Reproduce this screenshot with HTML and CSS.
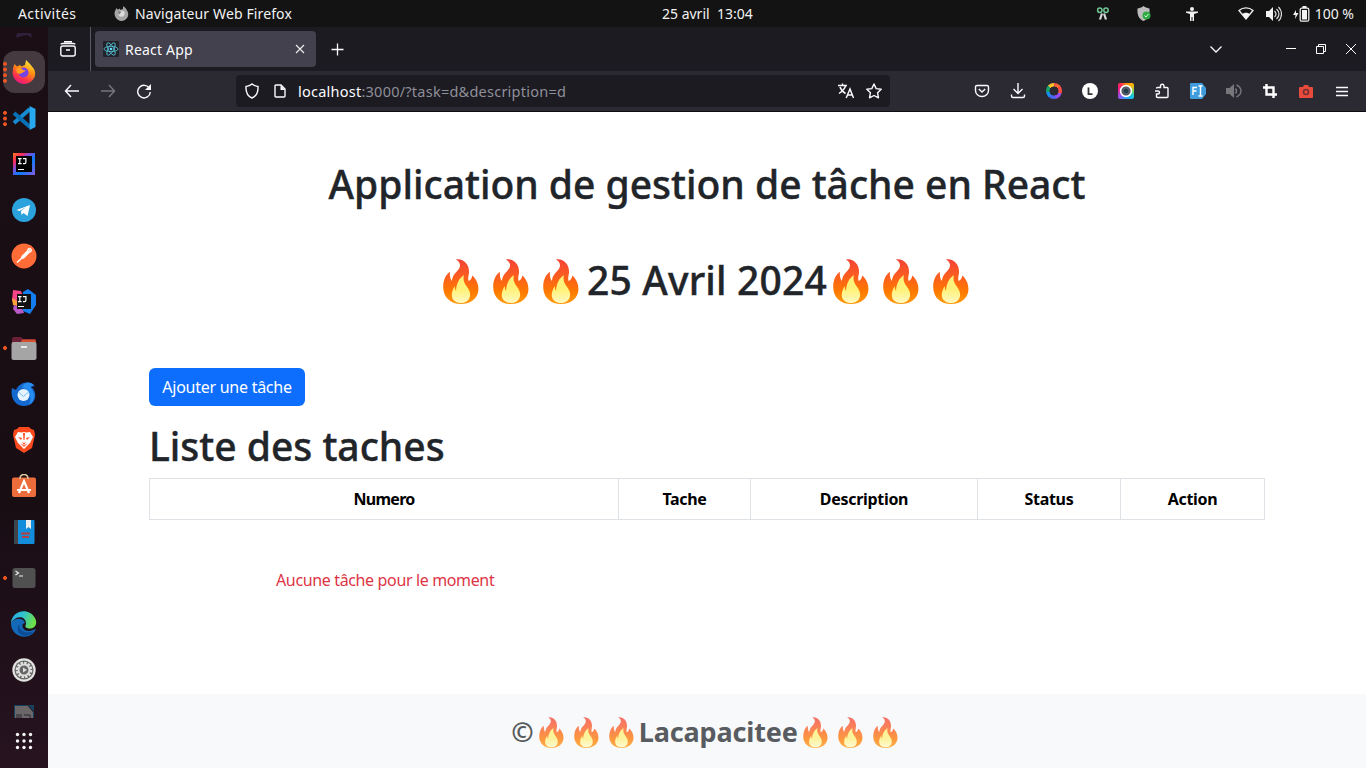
FILE: index.html
```
<!DOCTYPE html>
<html lang="fr">
<head>
<meta charset="utf-8">
<title>React App</title>
<link rel="stylesheet" href="styles.css">
</head>
<body>
<svg class="defs" width="0" height="0" aria-hidden="true">
  <defs>
    <linearGradient id="fl" x1="0" y1="0" x2="0" y2="1"><stop offset="0" stop-color="#f44336"/><stop offset=".35" stop-color="#fb5b22"/><stop offset=".7" stop-color="#ff7700"/><stop offset="1" stop-color="#ff9a0c"/></linearGradient>
    <linearGradient id="fi" x1="0" y1="0" x2="0" y2="1"><stop offset="0" stop-color="#fff176"/><stop offset=".55" stop-color="#fff27d"/><stop offset="1" stop-color="#fff9c4"/></linearGradient>
    <linearGradient id="ff" x1=".8" y1="0" x2=".3" y2="1"><stop offset="0" stop-color="#fff44f"/><stop offset=".4" stop-color="#ff980e"/><stop offset=".75" stop-color="#ff3647"/><stop offset="1" stop-color="#e31587"/></linearGradient>
    <linearGradient id="ij" x1="0" y1="0" x2="1" y2="1"><stop offset="0" stop-color="#fc801d"/><stop offset=".22" stop-color="#fe2857"/><stop offset=".4" stop-color="#7b4fe0"/><stop offset=".6" stop-color="#087cfa"/><stop offset="1" stop-color="#8a5be0"/></linearGradient>
    <linearGradient id="edge" x1="0" y1="0" x2="1" y2=".3"><stop offset="0" stop-color="#2aa7e8"/><stop offset=".5" stop-color="#2fc3cf"/><stop offset="1" stop-color="#6be04a"/></linearGradient>
    <symbol id="flame" viewBox="0 0 36 45">
      <path fill="url(#fl)" d="M13 .5C21-.8 26.500 6 26 13.500c-.2 3-1.400 5.500-.4 8.500 2-.5 3.200-2.500 3.800-5.400 4.600 4.400 6.200 9.500 6 14.400C35 39 28 45 18 45S0 38.500.2 27.500C.3 21.500 2.500 15.500 7 12.700 6.500 15.500 7 19.500 8.800 22c.9-5.500 3-7.500 5.700-10.300C18.500 7.500 17.500 3 13 .5z"/>
      <path fill="url(#fi)" d="M20.800 16c-.8 5.500.5 8 3 11.500 2.500 3.500 3.700 6 3.200 9.500-.7 4.800-4.500 7-8.800 7-5 0-9.200-2.600-9.400-7.500-.1-4 1.200-6.500 3-9.500 0 2 .2 3.400 1.200 4.700C13.500 24.500 16 19.500 20.800 16z"/>
    </symbol>
  </defs>
</svg>
<header class="panel">
  <span class="t act">Activités</span>
  <svg class="pf" width="15" height="15" viewBox="0 0 24 24"><path fill="#a5a5a5" d="M2 7l2-4 2 3 3-2 1 2 4-1 1-5 4 4 3 5c3 8-3 15-10 15S0 17 1 10z"/><circle cx="12" cy="12" r="5" fill="#ddd"/><path d="M6 8l6 1-4 5z" fill="#777"/></svg>
  <span class="t nav">Navigateur Web Firefox</span>
  <span class="t clock">25 avril&nbsp; 13:04</span>
  <div class="tray">
    <svg width="14" height="14" viewBox="0 0 14 14" fill="none"><g stroke="#72c795" stroke-width="1.500"><circle cx="3.800" cy="3.300" r="2.200"/><circle cx="10" cy="3.300" r="2.200"/></g><path d="M6 6.500L4 12.500M8 6.500l2 6" stroke="#d9d9d9" stroke-width="2.200"/></svg>
    <svg width="14" height="16" viewBox="0 0 14 16"><path fill="#bdbdbd" d="M6.500 0C9 2 11 2 12.500 2.500 13 9 11 13 6.500 15 2 13 0 9 .5 2.500 2 2 4 2 6.500 0z"/><circle cx="9.500" cy="9.500" r="4" fill="#2faa45"/><path d="M7.500 9.500l1.500 1.500 2.500-3" stroke="#cfffcf" fill="none"/></svg>
    <svg width="12" height="14" viewBox="0 0 12 14" fill="#f2f2f2"><circle cx="6" cy="2" r="2"/><path d="M0 4.500h12v1.300L8 7v7H6.500v-4h-1v4H4V7L0 5.800z"/></svg>
    <svg width="16" height="13" viewBox="0 0 16 13"><path fill="none" stroke="#eee" stroke-width="1.300" d="M1 3.500C5 0 11 0 15 3.500L8 12z"/><path fill="#f4f4f4" d="M4 7.200c2-2 6-2 8 0L8 12z"/></svg>
    <svg width="16" height="16" viewBox="0 0 16 16"><path fill="#f2f2f2" d="M0 5h3l4-4v14l-4-4H0z"/><path fill="none" stroke="#ddd" stroke-width="1.200" d="M8.500 5c2 2 2 4 0 6M10.500 3c3.300 3 3.300 7 0 10M12.500 1c4 4 4 10 0 14"/></svg>
    <svg width="17" height="16" viewBox="0 0 17 16"><path fill="#f2f2f2" d="M3 4L0 9h2.500L2 13l3.500-6H3z"/><rect x="7.200" y="2.200" width="8.600" height="13" rx="1.500" fill="none" stroke="#eee" stroke-width="1.300"/><path fill="#f2f2f2" d="M9 4h5v9.500H9zM9.500 0h4v2h-4z"/></svg>
    <span class="t pct">100 %</span>
  </div>
</header>
<div class="desk">
<nav class="dock">
  <div class="stub"><svg width="18" height="6" viewBox="0 0 18 6"><path d="M2 0h14l1 5-5-3-5 1-6 2z" fill="#30203c"/></svg></div>
  <div class="app on d4"><svg width="24" height="24" viewBox="0 0 24 24"><path fill="url(#ff)" d="M1 8l1.500-4L5 6.500 8 5l1.500 1.500L13 5l1-5 4 4 4 5c4 8-3 15-10 15S-1 17 1 10z"/><circle cx="11.500" cy="12.500" r="5" fill="#7542e5"/><path d="M4 9l4-2 3 3 3 .5-3 2-3 1.500-3-1z" fill="#ff9a22"/></svg></div>
  <div class="app d3"><svg width="24" height="24" viewBox="0 0 24 24"><path fill="none" stroke="#168bd2" stroke-width="4" d="M18 3L2 17"/><path fill="none" stroke="#0871b5" stroke-width="4" d="M18 21L2 7"/><path fill="#28a8ee" d="M17.500 0l6 3v18l-6 3z"/></svg></div>
  <div class="app"><svg width="24" height="24" viewBox="0 0 24 24"><path fill="url(#ij)" d="M1 1h22v22H1z"/><path d="M4 4h16v16H4z"/><path stroke="#fff" stroke-width="1.200" fill="none" d="M6 6.600h3.600M7.800 6.600v5M6 11.600h3.600M11 6.600h2.900v3.600q0 1.400-1.400 1.400H11M6 17.500h6"/></svg></div>
  <div class="app"><svg width="24" height="24" viewBox="0 0 24 24"><circle cx="12" cy="12" r="12" fill="#2ba2dc"/><path fill="#fff" d="M4.500 12L18 7l-2.500 11-4-3-2 2-.5-4 5-4-6.500 4z"/></svg></div>
  <div class="app"><svg width="26" height="26" viewBox="0 0 26 26"><circle cx="13" cy="13" r="12.500" fill="#ff6c37"/><path stroke="#fff" stroke-width="3.400" stroke-linecap="round" d="M17 9l-5 5"/><path stroke="#fff" stroke-width="1.500" d="M13 13l-7 6.500"/><circle cx="18.500" cy="7.300" r="2" fill="#ffd9c9" stroke="#fff"/></svg></div>
  <div class="app"><svg width="26" height="26" viewBox="0 0 26 26"><path fill="#f54586" d="M2 1l8 1 2 5-7 8-4-3z"/><path fill="#f9a13c" d="M1 9l5 3v5l-4-1z"/><path fill="#147df0" d="M12 3l5-3 8 6v10l-6 9-7-3z"/><path fill="#b75ac7" d="M3 16l8 3 2 5-7 1-4-5z"/><path fill="#111" d="M6 5h14v15H6z"/><path stroke="#fff" stroke-width="1.200" fill="none" d="M7 7.600h3.600M8.800 7.600v5M7 12.600h3.600M12 7.600h2.900v3.600q0 1.400-1.400 1.400H12M7 17.500h6"/></svg></div>
  <div class="app d1"><svg width="26" height="24" viewBox="0 0 26 24"><path fill="#6b2038" d="M1 3q0-2 2-2h7l2 2h13v8H1z"/><path fill="#d7502c" d="M11 3.500h12q2 0 2 2V9H9z"/><rect x=".5" y="6" width="25" height="18" rx="2" fill="#a5a5a5"/><path stroke="#fff" stroke-width="1.500" d="M10 11h6"/></svg></div>
  <div class="app"><svg width="26" height="26" viewBox="0 0 26 26"><path fill="#1469cf" d="M1 7l4 2c2-5 8-9 14-7l5 3-4 1c7 4 6 19-7 19C4 25-1 17 1 7z"/><path fill="#288df0" d="M11 6c2-5 8-6 12-2l-4 2c5 5 6 14-1 18 4-8 0-14-7-18z"/><circle cx="12.500" cy="14" r="6" fill="#e7f4ff"/><path d="M7.500 11l5 4.500 5-4.500" fill="none" stroke="#77bdf3"/></svg></div>
  <div class="app"><svg width="24" height="26" viewBox="0 0 24 26"><path fill="#fb4a1d" d="M7 0h10l2 2 3 1 1 5-3 13-8 5-8-5L1 8l1-5 3-1z"/><path fill="#fff" d="M6 5l4 .5 2-.5 2 .5 4-.5 3 5-3 6-3 3-3 3-3-3-3-3-3-6z"/><path fill="#fb4a1d" d="M6 10l4 1-1 2zM18 10l-4 1 1 2zM10 15l2 1 2-1-2 3zM11 6h2l-.5 7h-1zM8 16l4 2.500 4-2.500-4 4z"/></svg></div>
  <div class="app"><svg width="24" height="24" viewBox="0 0 24 24"><rect y="3.500" width="24" height="19.500" rx="2" fill="#ed6c3c"/><path d="M8 5c0-6 8-6 8 0" fill="none" stroke="#dccaa1" stroke-width="1.500"/><path d="M7 19l5-12 5 12M5 16h14" fill="none" stroke="#fff" stroke-width="2.200"/></svg></div>
  <div class="app"><svg width="22" height="26" viewBox="0 0 22 26"><rect x="1.500" y="1" width="20" height="24" rx="1" fill="#128ddc"/><path fill="#444" d="M1.500 1H5v24H1.500z"/><path fill="#eee" d="M13 1h5v9l-2.500-2L13 10z"/><path stroke="#b54141" stroke-width="1.800" d="M8 14.500h9M9 18h7"/></svg></div>
  <div class="app d1"><svg width="24" height="22" viewBox="0 0 24 22"><rect x=".5" y="1" width="23" height="20" rx="2.500" fill="#505050"/><path d="M3.500 4l3 2-3 2M7 9h4" fill="none" stroke="#eee" stroke-width="1.200"/></svg></div>
  <div class="app"><svg width="26" height="26" viewBox="0 0 26 26"><path fill="#1469b8" d="M0 12C4 6 13 7 14 12c-5 1-2 8 3 8 4 0 7-2 8-2-3 7-10 9-16 7C3 23 0 18 0 12z"/><path fill="url(#edge)" d="M0 12C1-1 18-4 24 7c4 8-3 12-8 10-3-1-1-2-1-5C14 4 4 5 0 12z"/><path fill="#0c4d96" d="M8 13c0 8 8 10 15 7-4 6-12 6-15 2-2-3-2-6 0-9z"/></svg></div>
  <div class="app"><svg width="24" height="24" viewBox="0 0 24 24"><circle cx="12" cy="12" r="11.700" fill="#e2e2e0"/><circle cx="12" cy="12" r="9.500" fill="#666"/><circle cx="12" cy="12" r="7" fill="none" stroke="#e2e2e0" stroke-width="2.500" stroke-dasharray="2.400 1.260"/><circle cx="12" cy="12" r="5.500" fill="none" stroke="#ddd" stroke-width="2"/><path d="M11 9.500l4 2.500-4 2.500z" fill="#ddd"/></svg></div>
  <div class="part"><svg width="20" height="13" viewBox="0 0 20 13"><path fill="#6b6769" d="M0 0h13l6 7v6H0z"/><path fill="#17425f" d="M14 0h6v7z"/><path d="M2 10h6M2 12h6M10 10h6v3" stroke="#292933" fill="none"/><path d="M0 .5h13M.5 0v13M19.500 7v6" stroke="#17425f"/></svg></div>
  <div class="grid"><svg width="18" height="18" viewBox="0 0 18 18" fill="#f5f5f5"><circle cx="2.500" cy="2.500" r="1.700"/><circle cx="9" cy="2.500" r="1.700"/><circle cx="15.500" cy="2.500" r="1.700"/><circle cx="2.500" cy="9" r="1.700"/><circle cx="9" cy="9" r="1.700"/><circle cx="15.500" cy="9" r="1.700"/><circle cx="2.500" cy="15.500" r="1.700"/><circle cx="9" cy="15.500" r="1.700"/><circle cx="15.500" cy="15.500" r="1.700"/></svg></div>
</nav>
<section class="win">
  <div class="tabs">
    <div class="view"><svg width="16" height="16" viewBox="0 0 16 16" fill="none" stroke="#fbfbfe" stroke-width="1.400"><rect x=".8" y="5" width="14.400" height="10" rx="2"/><path d="M1 3.500q0-1 1.500-1h11q1.500 0 1.500 1M4 .7h8M6 9h4"/></svg></div>
    <div class="tab">
      <svg width="16" height="16" viewBox="0 0 16 16"><rect width="16" height="16" rx="1" fill="#20232a"/><g fill="none" stroke="#5ac8df" stroke-width=".8"><ellipse cx="8" cy="8" rx="7" ry="2.700"/><ellipse cx="8" cy="8" rx="7" ry="2.700" transform="rotate(60 8 8)"/><ellipse cx="8" cy="8" rx="7" ry="2.700" transform="rotate(120 8 8)"/></g><circle cx="8" cy="8" r="1.300" fill="#61dafb"/></svg>
      <span class="t tt">React App</span>
      <svg class="x" width="10" height="10" viewBox="0 0 10 10"><path d="M1 1l8 8M9 1L1 9" stroke="#eee" stroke-width="1.100"/></svg>
    </div>
    <svg class="plus" width="13" height="13" viewBox="0 0 13 13"><path d="M6.500.5v12M.5 6.500h12" stroke="#fbfbfe" stroke-width="1.300"/></svg>
    <div class="wc">
      <svg width="14" height="9" viewBox="0 0 14 9"><path d="M1.500 1.500L7 7l5.500-5.500" fill="none" stroke="#fbfbfe" stroke-width="1.300"/></svg>
      <svg width="10" height="10" viewBox="0 0 10 10"><path d="M0 4.500h10" stroke="#fff"/></svg>
      <svg width="10" height="10" viewBox="0 0 10 10"><path d="M.5 2.500h7v7h-7zM2.500 2.500v-2h7v7h-2" fill="none" stroke="#fff"/></svg>
      <svg width="10" height="10" viewBox="0 0 10 10"><path d="M0 0l10 10M10 0L0 10" stroke="#fff"/></svg>
    </div>
  </div>
  <div class="bar">
    <svg class="bk" width="16" height="14" viewBox="0 0 16 14"><path d="M7 1L1.500 7 7 13M1.500 7H15" fill="none" stroke="#fbfbfe" stroke-width="1.400"/></svg>
    <svg class="fw" width="16" height="14" viewBox="0 0 16 14"><path d="M9 1l5.500 6L9 13M14.500 7H1" fill="none" stroke="#77767f" stroke-width="1.400"/></svg>
    <svg class="rl" width="16" height="16" viewBox="0 0 16 16"><path d="M13.500 5.500A6.300 6.300 0 1 0 14.300 9" fill="none" stroke="#fbfbfe" stroke-width="1.400"/><path d="M15 1v6H9z" fill="#fbfbfe"/></svg>
    <div class="url">
      <svg width="16" height="16" viewBox="0 0 16 16"><path d="M8 1c2 1.700 4 2 6 2.500C14.300 9 12.500 13 8 15 3.500 13 1.700 9 2 3.500 4 3 6 2.700 8 1z" fill="none" stroke="#fbfbfe" stroke-width="1.400"/></svg>
      <svg width="12" height="14" viewBox="0 0 12 14"><path d="M1 2q0-1 1-1h5l4 4v7q0 1-1 1H2q-1 0-1-1z" fill="none" stroke="#fbfbfe" stroke-width="1.400"/><path fill="#fbfbfe" d="M6.500 1v5H11z"/></svg>
      <span class="t ad"><b>localhost</b>:3000/?task=d&amp;description=d</span>
      <svg class="tr" width="16" height="16" viewBox="0 0 16 16"><path d="M0 2.500h9M4.500.5v2M7.500 3C6.500 6 4 8.500 1 10.500M2 4c1 3 3 5 5.500 6.500M8.200 15L12 6l3.500 9M9.500 12h5" fill="none" stroke="#fbfbfe" stroke-width="1.500"/></svg>
      <svg class="st" width="16" height="16" viewBox="0 0 16 16"><path d="M8 1l2.200 4.600 5 .7-3.600 3.500.9 5L8 12.500l-4.500 2.300.9-5L.8 6.300l5-.7z" fill="none" stroke="#fbfbfe" stroke-width="1.400" stroke-linejoin="round"/></svg>
    </div>
    <div class="ext">
      <svg width="16" height="16" viewBox="0 0 16 16" fill="none" stroke="#fbfbfe" stroke-width="1.400"><path d="M3 2.500h10q1.500 0 1.500 1.500v3.500a6.500 6 0 0 1-13 0V4Q1.500 2.500 3 2.500z"/><path d="M4.800 6L8 9l3.200-3"/></svg>
      <svg width="16" height="16" viewBox="0 0 16 16" fill="none" stroke="#fbfbfe" stroke-width="1.400"><path d="M8 0v10M3.500 6L8 10.500 12.500 6M1.500 11.500V13q0 1.500 1.500 1.500h10q1.500 0 1.500-1.500v-1.500"/></svg>
      <i class="ring"></i>
      <svg width="16" height="16" viewBox="0 0 16 16"><circle cx="8" cy="8" r="8" fill="#fff"/><path d="M6.500 4.500v6.700h4" fill="none" stroke="#333" stroke-width="1.800"/></svg>
      <i class="lens"><svg width="16" height="16" viewBox="0 0 16 16"><circle cx="8" cy="8" r="5.400" fill="#55505c" stroke="#fff" stroke-width="1.600"/><circle cx="8" cy="8" r="3" fill="#263d4c" stroke="#657483" stroke-width=".7"/></svg></i>
      <svg width="16" height="16" viewBox="0 0 16 16"><path d="M2.500 5.500q0-1 1-1h3V3q0-1.700 1.700-1.700T10 3v1.500h3q1 0 1 1v8q0 1-1 1H3.500q-1 0-1-1V11h1.300q1.700 0 1.700-1.500T3.800 8H1" fill="none" stroke="#fbfbfe" stroke-width="1.400"/></svg>
      <svg width="16" height="16" viewBox="0 0 16 16"><path fill="#409ddd" d="M1 0h11l4 5v6l-4 5H1q-1 0-1-1V1q0-1 1-1z"/><path d="M3 12V4.500h4M3 8h3.500M8.500 3h4M8.500 13h4M10.500 3v10" fill="none" stroke="#fff" stroke-width="1.400"/></svg>
      <svg width="16" height="16" viewBox="0 0 16 16"><path fill="#77767b" d="M0 5h3.500L8 1v14l-4.500-4H0z"/><path fill="none" stroke="#77767b" stroke-width="1.400" d="M9.500 5.500q2 2.500 0 5M10.500 2c6 3 6 9 0 12"/></svg>
      <svg width="14" height="14" viewBox="0 0 14 14"><path d="M3.500 0v10.500H14M0 3.500h10.500V14" fill="none" stroke="#fff" stroke-width="2.400"/></svg>
      <svg width="14" height="13" viewBox="0 0 14 13"><path fill="#e84b3c" d="M1 2h3l1-2h4l1 2h3q1 0 1 1v9q0 1-1 1H1q-1 0-1-1V3q0-1 1-1z"/><circle cx="7" cy="7" r="2.500" fill="none" stroke="#713030" stroke-width="1.600"/></svg>
      <svg width="12" height="11" viewBox="0 0 12 11"><path d="M0 1.500h12M0 5.500h12M0 9.500h12" stroke="#fbfbfe" stroke-width="1.300"/></svg>
    </div>
  </div>
  <main class="page">
    <h1 class="title"><span class="t h">Application de gestion de tâche en React</span></h1>
    <h1 class="date"><svg class="f"><use href="#flame"/></svg><svg class="f"><use href="#flame"/></svg><svg class="f"><use href="#flame"/></svg><span class="t dt">25 Avril 2024</span><svg class="f"><use href="#flame"/></svg><svg class="f"><use href="#flame"/></svg><svg class="f"><use href="#flame"/></svg></h1>
    <button class="btn"><span class="t bt">Ajouter une tâche</span></button>
    <h1 class="list"><span class="t li">Liste des taches</span></h1>
    <table><tr><th class="c1">Numero</th><th class="c2">Tache</th><th class="c3">Description</th><th class="c4">Status</th><th class="c5">Action</th></tr></table>
    <p class="empty"><span class="t em">Aucune tâche pour le moment</span></p>
    <footer><span class="t cp">©</span><svg class="g"><use href="#flame"/></svg><svg class="g"><use href="#flame"/></svg><svg class="g"><use href="#flame"/></svg><span class="t la">Lacapacitee</span><svg class="g"><use href="#flame"/></svg><svg class="g"><use href="#flame"/></svg><svg class="g"><use href="#flame"/></svg></footer>
  </main>
</section>
</div>
</body>
</html>
```
FILE: styles.css
```
* { box-sizing: border-box; }
body { margin: 0; width: 1366px; height: 768px; overflow: hidden; font-family: "Noto Sans", "Open Sans", sans-serif; background: #fff; }
svg { display: block; flex: none; }
.defs { position: absolute; }
.t { white-space: nowrap; }
.panel { height: 27px; background: #131313; color: #f2f2f2; display: grid; grid-template-columns: 18px 96px 21px 527px 1fr auto; align-items: center; font-size: 14px; line-height: 27px; }
.act { grid-column: 2; letter-spacing: .4px; }
.nav { grid-column: 4; letter-spacing: .12px; }
.pf { grid-column: 3; }
.tray { display: flex; align-items: center; padding-right: 12px; }
.tray svg:nth-child(1) { margin-right: 27px; }
.tray svg:nth-child(2) { margin-right: 35px; }
.tray svg:nth-child(3) { margin-right: 40px; }
.tray svg:nth-child(4) { margin-right: 12px; }
.tray svg:nth-child(5) { margin-right: 11px; }
.tray svg:nth-child(6) { margin-right: 5px; }
.desk { display: flex; height: 741px; }
.dock { width: 48px; flex: none; background: linear-gradient(#1b0e15, #190d14 65%, #26131f); display: flex; flex-direction: column; }
.stub { height: 22px; padding: 6px 0 0 15px; }
.app { height: 46px; position: relative; display: flex; align-items: center; justify-content: center; }
.on::after { content: ""; position: absolute; left: 3px; top: 2px; width: 42px; height: 42px; border-radius: 12px; background: #453a40; }
.app svg { position: relative; z-index: 1; }
.app::before { position: absolute; left: 3px; width: 4px; z-index: 2; border-radius: 2px; }
.d4::before, .d3::before, .d1::before { content: ""; background: radial-gradient(circle, #e95420 1.700px, transparent 2.200px) 0 0 / 4px 5.700px; }
.d4::before { height: 23px; }
.d3::before { height: 17px; }
.d1::before { height: 6px; }
.part { height: 25px; padding: 12px 0 0 14px; }
.grid { padding: 14px 0 0 15px; }
.win { flex: 1; min-width: 0; display: flex; flex-direction: column; }
.tabs { height: 44px; background: #1c1b22; display: flex; align-items: center; }
.view { width: 43px; height: 44px; border-right: 1px solid #5b5a62; padding: 14px 0 0 12px; }
.tab { margin-left: 4px; width: 221px; height: 36px; border-radius: 4px; background: #42414d; display: flex; align-items: center; padding: 0 11px 0 8px; color: #fbfbfe; font-size: 14px; }
.tt { margin-left: 6px; letter-spacing: .2px; }
.x { margin-left: auto; }
.plus { margin-left: 15px; }
.wc { margin-left: auto; display: flex; align-items: center; padding-right: 10px; }
.wc svg:nth-child(1) { margin-right: 63px; }
.wc svg:nth-child(2), .wc svg:nth-child(3) { margin-right: 20px; }
.bar { height: 41px; background: #2b2a33; border-bottom: 1px solid #0d0d10; display: flex; align-items: center; padding-left: 16px; }
.fw { margin-left: 20px; }
.rl { margin-left: 20px; }
.url { margin-left: 84px; width: 654px; flex: none; height: 32px; background: #1c1b22; border-radius: 4px; display: flex; align-items: center; padding: 0 8px; color: #8f8f99; font-size: 14.500px; }
.url svg:nth-child(2) { margin-left: 14px; }
.ad { margin-left: 12px; letter-spacing: .24px; }
.ad b { color: #fbfbfe; font-weight: 400; }
.tr { margin-left: auto; }
.st { margin-left: 12px; }
.ext { display: flex; margin-left: 84px; align-items: center; }
.ext > * { margin-right: 20px; flex: none; }
.ext > :nth-child(8) { margin-right: 21px; }
.ext > :nth-child(9) { margin-right: 22px; }
.ext > :nth-child(10) { margin-right: 23px; }
.ext > :last-child { margin-right: 0; }
.ring { width: 16px; height: 16px; border-radius: 8px; background: radial-gradient(circle, #2b2a33 4.300px, transparent 4.800px), conic-gradient(#f54, #fb7128 50deg, #ff4d42 50deg 110deg, #944df5 110deg 165deg, #4967f0 165deg 220deg, #138ff0 220deg 260deg, #16a36b 260deg 315deg, #ffbf2c 315deg); }
.lens { width: 16px; height: 16px; border-radius: 2px; background: conic-gradient(#ff8a00, #ffb300 45deg, #7bd35a 90deg, #14c8e0 130deg, #28a0ff 180deg, #8b5cf6 225deg, #f0148c 280deg, #ff2d55 320deg, #ff8a00); }
.page { flex: 1; background: #fff; color: #212529; display: flex; flex-direction: column; padding-left: 101px; }
h1 { font-weight: 500; font-size: 39px; line-height: 48px; margin: 0; -webkit-text-stroke: .4px #212529; }
.title { width: 1116px; text-align: center; margin-top: 48px; }
.date { width: 1116px; display: flex; justify-content: center; align-items: center; margin-top: 48px; }
.dt { letter-spacing: .17px; }
.f { width: 36px; height: 45px; margin: 2px 8px 0 6px; }
.btn { align-self: flex-start; width: 156px; height: 38px; margin-top: 64px; border: 0; border-radius: 6px; background: #0d6efd; color: #fff; font: 16px "Noto Sans", sans-serif; letter-spacing: -.26px; padding: 0; }
.list { margin-top: 16px; }
table { margin-top: 8px; width: 1116px; border-collapse: collapse; table-layout: fixed; color: #000; font-size: 16px; letter-spacing: -.3px; }
th { border: 1px solid #dee2e6; height: 41px; padding: 0; font-weight: 700; }
.c1 { width: 469px; letter-spacing: -.7px; } .c2 { width: 132px; } .c3 { width: 227px; } .c4 { width: 143px; }
.empty { margin: 48px 0 0 127px; color: #dc3545; font-size: 16px; line-height: 24px; letter-spacing: -.36px; }
footer { margin: auto 0 0 -101px; height: 74px; background: #f8f9fa; display: flex; align-items: center; justify-content: center; font-size: 27px; font-weight: 700; color: #585c60; }
.la { letter-spacing: -.15px; }
.g { width: 25px; height: 31px; margin: 3px 5px 0; opacity: .75; }
```
